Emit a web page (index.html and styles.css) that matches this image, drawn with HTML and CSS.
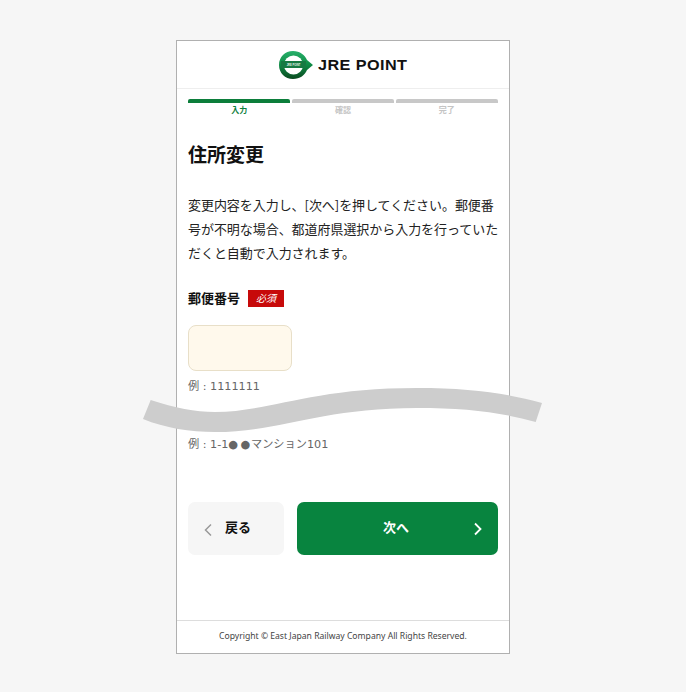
FILE: index.html
```html
<!DOCTYPE html>
<html lang="ja">
<head>
<meta charset="utf-8">
<title>住所変更</title>
<link rel="stylesheet" href="styles.css">
</head>
<body>
<div class="stage">
  <div class="phone">
    <header class="brand">
      <svg class="brand-mark" viewBox="0 0 36 30" width="36" height="30" aria-hidden="true">
        <defs>
          <linearGradient id="lg" x1="0" y1="0" x2="0" y2="1">
            <stop offset="0" stop-color="#27b06a"/>
            <stop offset="0.5" stop-color="#0f8a45"/>
            <stop offset="1" stop-color="#0a4a20"/>
          </linearGradient>
        </defs>
        <path d="M15 1 C22 1 27 5 29 10 L35 15 L29 20 C27 25 22 29 15 29 C7 29 1 23 1 15 C1 7 7 1 15 1 Z" fill="url(#lg)"/>
        <circle cx="15.500" cy="15" r="9.500" fill="#fff"/>
        <rect x="3" y="11" width="25" height="7" fill="#167a42"/>
        <text class="mark-text" x="15.500" y="15.600" text-anchor="middle">JRE POINT</text>
      </svg>
      <span class="brand-name">JRE POINT</span>
    </header>

    <ol class="steps">
      <li class="step is-current">入力</li>
      <li class="step">確認</li>
      <li class="step">完了</li>
    </ol>

    <main class="content">
      <h1 class="title">住所変更</h1>
      <p class="lead">変更内容を入力し、[次へ]を押してください。郵便番<br>号が不明な場合、都道府県選択から入力を行っていた<br>だくと自動で入力されます。</p>

      <div class="field-label">
        <span>郵便番号</span>
        <span class="required">必須</span>
      </div>
      <div class="input"></div>
      <p class="hint hint-first">例 : 1111111</p>
      <p class="hint hint-second">例 : 1-1<span class="dots">●●</span>マンション101</p>

      <div class="actions">
        <button class="btn btn-back" type="button">
          <svg class="chev" viewBox="0 0 10 14" width="10" height="14" aria-hidden="true"><path d="M8 1.500 L2.500 7 L8 12.500" fill="none" stroke="#999" stroke-width="1.500"/></svg>
          <span class="btn-text">戻る</span>
        </button>
        <button class="btn btn-next" type="button">
          <span class="btn-text">次へ</span>
          <svg class="chev chev-next" viewBox="0 0 10 14" width="10" height="14" aria-hidden="true"><path d="M2 1.500 L7.500 7 L2 12.500" fill="none" stroke="#fff" stroke-width="1.800"/></svg>
        </button>
      </div>
    </main>

    <footer class="footer">Copyright © East Japan Railway Company All Rights Reserved.</footer>
  </div>

  <svg class="wave" viewBox="0 0 686 692" width="686" height="692" aria-hidden="true">
    <path d="M150.700 400 C175 408 195 412 215 412 C270 412 310 388 417 388 C470 388 505 393 542 403 L535.700 422 C500 412 465 408 417 408 C320 408 280 432 215 432 C190 432 165 428 143 419 Z" fill="#cdcdcd"/>
  </svg>
</div>
</body>
</html>
```
FILE: styles.css
```css
* { box-sizing: border-box; }
html, body { margin: 0; padding: 0; }
body {
  background: #f6f6f6;
  font-family: "Noto Sans CJK JP", "Noto Sans", sans-serif;
  color: #111;
}
.stage {
  position: relative;
  width: 686px;
  height: 692px;
  padding: 40px 0 0 176px;
  overflow: hidden;
}
.phone {
  width: 334px;
  height: 614px;
  background: #fff;
  border: 1px solid #b0b0b0;
  display: flex;
  flex-direction: column;
}
.brand {
  height: 48px;
  flex: none;
  border-bottom: 1px solid #eee;
  display: flex;
  align-items: center;
  justify-content: center;
  gap: 4px;
  padding-right: 0;
}
.mark-text {
  font-family: "Liberation Sans", sans-serif;
  font-size: 2.600px;
  font-weight: 700;
  fill: #e6f5ec;
}
.brand-name {
  font-family: "Liberation Sans", sans-serif;
  font-weight: 700;
  font-size: 15px;
  letter-spacing: 0.4px;
  color: #111;
  white-space: nowrap;
  transform: scaleX(1.08);
  transform-origin: left center;
  width: 90px;
}
.steps {
  list-style: none;
  margin: 10px 11px 0;
  padding: 0;
  display: grid;
  grid-template-columns: 1fr 1fr 1fr;
  column-gap: 1.500px;
}
.step {
  border-top: 4px solid #c8c8c8;
  border-radius: 2px 2px 0 0;
  text-align: center;
  font-size: 8px;
  font-weight: 700;
  line-height: 12px;
  padding-top: 1px;
  color: #c4c4c4;
}
.step.is-current {
  border-top-color: #0c7e3b;
  color: #0c7e3b;
}
.content {
  flex: 1;
  padding: 0 11px;
  display: flex;
  flex-direction: column;
}
.title {
  margin: 25px 0 0;
  font-size: 19px;
  line-height: 26px;
  font-weight: 700;
}
.lead {
  margin: 26px 0 0;
  font-size: 13px;
  line-height: 24px;
  letter-spacing: -0.05px;
  white-space: nowrap;
  color: #222;
}
.field-label {
  margin-top: 24px;
  display: flex;
  align-items: center;
  gap: 8px;
  font-size: 13px;
  line-height: 18px;
  font-weight: 700;
}
.required {
  width: 36px;
  height: 17px;
  background: #c70a0a;
  color: #fff;
  font-size: 10px;
  font-style: italic;
  font-weight: 400;
  line-height: 16px;
  text-align: center;
}
.input {
  margin-top: 18px;
  width: 104px;
  height: 46px;
  background: #fff9ec;
  border: 1px solid #e8dfc8;
  border-radius: 8px;
}
.hint {
  margin: 0;
  font-family: "DejaVu Sans", "Noto Sans CJK JP", sans-serif;
  font-size: 11.200px;
  line-height: 18px;
  color: #666;
}
.dots { letter-spacing: 2.300px; margin-right: -1.500px; }
.hint-first { margin-top: 7px; }
.hint-second { margin-top: 40px; }
.actions {
  margin-top: 48px;
  display: flex;
  gap: 13px;
}
.btn {
  position: relative;
  height: 53px;
  border: 0;
  border-radius: 7px;
  font-family: inherit;
  font-size: 13px;
  font-weight: 700;
  display: flex;
  align-items: center;
  padding: 0;
}
.btn-text { margin-bottom: 4px; }
.btn-back {
  width: 96px;
  background: #f6f6f6;
  color: #111;
  padding-left: 15px;
  gap: 12px;
}
.btn-next {
  width: 201px;
  background: #08843f;
  color: #fff;
  justify-content: center;
  padding-right: 3px;
}
.chev { flex: none; margin-top: 2px; }
.chev-next { position: absolute; right: 15px; top: 20px; margin: 0; }
.footer {
  flex: none;
  height: 33px;
  border-top: 1px solid #ddd;
  text-align: center;
  font-family: "Noto Sans", sans-serif;
  font-size: 8.600px;
  line-height: 30px;
  color: #444;
  white-space: nowrap;
}
.wave {
  position: absolute;
  left: 0;
  top: 0;
  pointer-events: none;
}
```
